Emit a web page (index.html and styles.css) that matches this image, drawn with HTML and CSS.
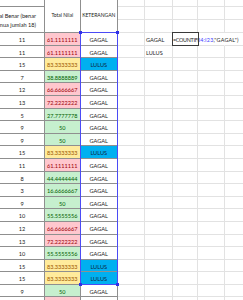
FILE: index.html
```html
<!DOCTYPE html>
<html>
<head>
<meta charset="utf-8">
<link rel="stylesheet" href="styles.css">
</head>
<body>
<div class="sheet">
  <div class="c t top1"></div>
  <div class="c t h1"><span>Jumlah Soal Benar (benar</span><span>semua jumlah 18)</span></div>
  <div class="c t h2">Total Nilai</div>
  <div class="c t h3">KETERANGAN</div>

  <div class="c"></div><div class="c"></div><div class="c"></div><div class="c"></div><div class="c"></div>
  <div class="c"></div><div class="c"></div><div class="c"></div><div class="c"></div><div class="c"></div>
  <div class="c"></div><div class="c"></div><div class="c"></div><div class="c"></div><div class="c"></div>

  <div class="c t">11</div><div class="c t red">61.1111111</div><div class="c t k">GAGAL</div>
  <div class="c"></div><div class="c lbl">GAGAL</div><div class="c lbl nor formula"><span class="ftxt"><span class="fn">=COUNTIF(</span><span class="ref">I4:I23</span>,"GAGAL")</span></div><div class="c nor"></div><div class="c"></div>

  <div class="c t">11</div><div class="c t red">61.1111111</div><div class="c t k">GAGAL</div>
  <div class="c"></div><div class="c lbl">LULUS</div><div class="c"></div><div class="c"></div><div class="c"></div>

  <div class="c t">15</div><div class="c t yel">83.3333333</div><div class="c t k blue">LULUS</div>
  <div class="c"></div><div class="c"></div><div class="c"></div><div class="c"></div><div class="c"></div>

  <div class="c t">7</div><div class="c t grn">38.8888889</div><div class="c t k">GAGAL</div>
  <div class="c"></div><div class="c"></div><div class="c"></div><div class="c"></div><div class="c"></div>

  <div class="c t">12</div><div class="c t red">66.6666667</div><div class="c t k">GAGAL</div>
  <div class="c"></div><div class="c"></div><div class="c"></div><div class="c"></div><div class="c"></div>

  <div class="c t">13</div><div class="c t red">72.2222222</div><div class="c t k">GAGAL</div>
  <div class="c"></div><div class="c"></div><div class="c"></div><div class="c"></div><div class="c"></div>

  <div class="c t">5</div><div class="c t grn">27.7777778</div><div class="c t k">GAGAL</div>
  <div class="c"></div><div class="c"></div><div class="c"></div><div class="c"></div><div class="c"></div>

  <div class="c t">9</div><div class="c t grn">50</div><div class="c t k">GAGAL</div>
  <div class="c"></div><div class="c"></div><div class="c"></div><div class="c"></div><div class="c"></div>

  <div class="c t">9</div><div class="c t grn">50</div><div class="c t k">GAGAL</div>
  <div class="c"></div><div class="c"></div><div class="c"></div><div class="c"></div><div class="c"></div>

  <div class="c t">15</div><div class="c t yel">83.3333333</div><div class="c t k blue">LULUS</div>
  <div class="c"></div><div class="c"></div><div class="c"></div><div class="c"></div><div class="c"></div>

  <div class="c t">11</div><div class="c t red">61.1111111</div><div class="c t k">GAGAL</div>
  <div class="c"></div><div class="c"></div><div class="c"></div><div class="c"></div><div class="c"></div>

  <div class="c t">8</div><div class="c t grn">44.4444444</div><div class="c t k">GAGAL</div>
  <div class="c"></div><div class="c"></div><div class="c"></div><div class="c"></div><div class="c"></div>

  <div class="c t">3</div><div class="c t grn">16.6666667</div><div class="c t k">GAGAL</div>
  <div class="c"></div><div class="c"></div><div class="c"></div><div class="c"></div><div class="c"></div>

  <div class="c t">9</div><div class="c t grn">50</div><div class="c t k">GAGAL</div>
  <div class="c"></div><div class="c"></div><div class="c"></div><div class="c"></div><div class="c"></div>

  <div class="c t">10</div><div class="c t grn">55.5555556</div><div class="c t k">GAGAL</div>
  <div class="c"></div><div class="c"></div><div class="c"></div><div class="c"></div><div class="c"></div>

  <div class="c t">12</div><div class="c t red">66.6666667</div><div class="c t k">GAGAL</div>
  <div class="c"></div><div class="c"></div><div class="c"></div><div class="c"></div><div class="c"></div>

  <div class="c t">13</div><div class="c t red">72.2222222</div><div class="c t k">GAGAL</div>
  <div class="c"></div><div class="c"></div><div class="c"></div><div class="c"></div><div class="c"></div>

  <div class="c t">10</div><div class="c t grn">55.5555556</div><div class="c t k">GAGAL</div>
  <div class="c"></div><div class="c"></div><div class="c"></div><div class="c"></div><div class="c"></div>

  <div class="c t">15</div><div class="c t yel">83.3333333</div><div class="c t k blue">LULUS</div>
  <div class="c"></div><div class="c"></div><div class="c"></div><div class="c"></div><div class="c"></div>

  <div class="c t">15</div><div class="c t yel">83.3333333</div><div class="c t k blue">LULUS</div>
  <div class="c"></div><div class="c"></div><div class="c"></div><div class="c"></div><div class="c"></div>

  <div class="c t">9</div><div class="c t grn">50</div><div class="c t k">GAGAL</div>
  <div class="c"></div><div class="c"></div><div class="c"></div><div class="c"></div><div class="c"></div>

  <div class="c t last"></div><div class="c t red last"></div><div class="c t k last"></div>
  <div class="c"></div><div class="c"></div><div class="c"></div><div class="c"></div><div class="c"></div>

  <div class="range"><i class="hd tl"></i><i class="hd tr"></i><i class="hd bl"></i><i class="hd br"></i></div>
  <div class="active"></div>
</div>
</body>
</html>
```
FILE: styles.css
```css
html, body {
  margin: 0;
  padding: 0;
  background: #ffffff;
  overflow: hidden;
  height: 300px;
}

.sheet {
  position: relative;
  display: grid;
  grid-template-columns: 45px 35.5px 37.5px 27px 27.5px 25.5px 27px 30px;
  grid-template-rows: 7px 13px 13px repeat(22, 12.6px);
  font-family: Lato, "Liberation Sans", sans-serif;
  color: #1b1b1b;
}

.c {
  box-sizing: border-box;
  min-width: 0;
  border-right: 1px solid #e2e2e2;
  border-bottom: 1px solid #e2e2e2;
  font-size: 5.6px;
  line-height: 6px;
  display: flex;
  align-items: flex-end;
  justify-content: center;
  padding-bottom: 1.5px;
  white-space: nowrap;
}

.c.t {
  border-color: #8f8f8f;
}

.top1 {
  grid-column: 1;
  grid-row: 1;
}

.h1 {
  grid-column: 1;
  grid-row: 2 / 4;
  flex-direction: column;
  align-items: flex-end;
  justify-content: center;
  padding: 1px 8px 0 0;
  line-height: 9px;
}

.h2 {
  grid-column: 2;
  grid-row: 1 / 4;
  align-items: center;
  padding: 0 0 3px 0;
  font-size: 5px;
}

.h3 {
  grid-column: 3;
  grid-row: 1 / 4;
  align-items: center;
  padding: 0 0 3px 0;
  font-size: 5px;
}

.red { background: #ffc7ce; color: #9c0006; }
.yel { background: #ffeb9c; color: #9c5700; }
.grn { background: #c6efce; color: #006100; }
.blue { background: #00b0f0; color: #0c2340; }

.lbl {
  justify-content: flex-start;
  padding-left: 1px;
}

.nor {
  border-right-color: transparent;
}

.formula {
  overflow: visible;
  padding-left: 0.5px;
}

.ftxt {
  flex-shrink: 0;
  font-size: 5.4px;
  letter-spacing: 0.2px;
}

.fn {
  letter-spacing: -0.3px;
}

.ref {
  color: #3b3bff;
}

.range {
  position: absolute;
  grid-column: 3 / 4;
  grid-row: 4 / 24;
  top: -1px;
  left: -1px;
  right: 0;
  bottom: 0;
  border: 1px solid #4b4bf5;
  pointer-events: none;
}

.hd {
  position: absolute;
  width: 3px;
  height: 3px;
  background: #3030e8;
}
.tl { left: -2px; top: -2px; }
.tr { right: -2px; top: -2px; }
.bl { left: -2px; bottom: -2px; }
.br { right: -2px; bottom: -2px; }

.active {
  position: absolute;
  grid-column: 6 / 7;
  grid-row: 4 / 5;
  top: -1px;
  left: -1px;
  right: -1px;
  bottom: 0;
  border: 1px solid #3a3a3a;
  pointer-events: none;
}
```
